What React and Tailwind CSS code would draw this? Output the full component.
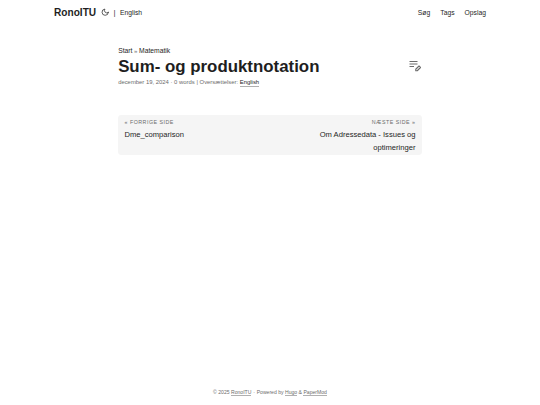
import React from "react";

const menu = ["Søg", "Tags", "Opslag"];

function MoonIcon() {
  return (
    <svg
      className="w-[8.400px] h-[8.400px]"
      viewBox="0 0 24 24"
      fill="none"
      stroke="currentColor"
      strokeWidth="2"
      strokeLinecap="round"
      strokeLinejoin="round"
    >
      <path d="M21 12.79A9 9 0 1 1 11.21 3 7 7 0 0 0 21 12.79z" />
    </svg>
  );
}

function EditIcon() {
  return (
    <svg className="w-[14px] h-[14px]" viewBox="0 0 28 28" fill="none" stroke="currentColor">
      <path d="M3 5h16M3 10h16M3 15h9" strokeWidth="2" />
      <path d="M15.500 23.500v-3l6.500-6.500 3 3-6.500 6.500z" strokeWidth="2.200" strokeLinejoin="round" />
    </svg>
  );
}

function Header() {
  return (
    <header className="w-[432px] h-[25.3px] mx-auto flex items-center justify-between text-[6.75px]">
      <div className="flex items-center">
        <a href="#" className="text-[10.125px] font-bold">
          RonoITU
        </a>
        <button className="ml-[4.5px] mr-[4.5px]" aria-label="Toggle theme">
          <MoonIcon />
        </button>
        <span className="text-[8px] text-[#3c3c3c]">|</span>
        <a href="#" className="ml-[4.4px]">
          English
        </a>
      </div>
      <nav className="flex gap-[10.1px]">
        {menu.map((item) => (
          <a key={item} href="#">
            {item}
          </a>
        ))}
      </nav>
    </header>
  );
}

function PostHeader() {
  return (
    <div className="pt-[21px]">
      <div className="text-[6.75px] leading-[10.8px]">
        <a href="#">Start</a>
        <span className="text-[6px] text-[#6c6c6c]">&nbsp;»&nbsp;</span>
        <a href="#">Matematik</a>
      </div>
      <div className="-mt-[0.8px] flex items-center justify-between">
        <h1 className="text-[16.875px] leading-[21.9px] font-bold">Sum- og produktnotation</h1>
        <a href="#" className="text-[#6c6c6c] -mt-[3px]" aria-label="Edit">
          <EditIcon />
        </a>
      </div>
      <div className="text-[5.906px] leading-[9.45px] text-[#6c6c6c]">
        december 19, 2024&nbsp;·&nbsp;0 words&nbsp;|&nbsp;Oversættelser:{" "}
        <a href="#" className="text-[#1e1e1e] pb-[1px] border-b-[1px] border-[#b0b0b0]">
          English
        </a>
      </div>
    </div>
  );
}

function Paginav() {
  return (
    <nav className="mt-[27px] h-10 flex justify-between rounded-[3.4px] bg-[#f5f5f5] px-[6.4px] pt-[1px] text-[7.6px] leading-[12.66px]">
      <a href="#" className="flex flex-col w-[146px]">
        <span className="mb-[0.8px] text-[5.3px] tracking-[0.5px] text-[#6c6c6c]">« FORRIGE SIDE</span>
        <span>Dme_comparison</span>
      </a>
      <a href="#" className="flex flex-col w-[110px] text-right">
        <span className="mb-[0.8px] text-[5.3px] tracking-[0.5px] text-[#6c6c6c]">NÆSTE SIDE »</span>
        <span>Om Adressedata - Issues og optimeringer</span>
      </a>
    </nav>
  );
}

function Footer() {
  const link = "border-b-[1px] border-[#b0b0b0]";
  return (
    <footer className="h-[25.3px] text-center text-[5.1px] leading-[10.1px] pt-[7.5px] text-[#6c6c6c]">
      © 2025 <a href="#" className={link}>RonoITU</a>
      <span className="mx-[0.4px]">{" · "}</span>
      Powered by <a href="#" className={link}>Hugo</a> &amp;{" "}
      <a href="#" className={link}>PaperMod</a>
    </footer>
  );
}

export default function App() {
  return (
    <div className="h-screen overflow-hidden flex flex-col bg-white text-[#1e1e1e] font-['Liberation_Sans',Arial,sans-serif]">
      <Header />
      <main className="w-[303.75px] mx-auto flex-1">
        <PostHeader />
        <Paginav />
      </main>
      <Footer />
    </div>
  );
}
